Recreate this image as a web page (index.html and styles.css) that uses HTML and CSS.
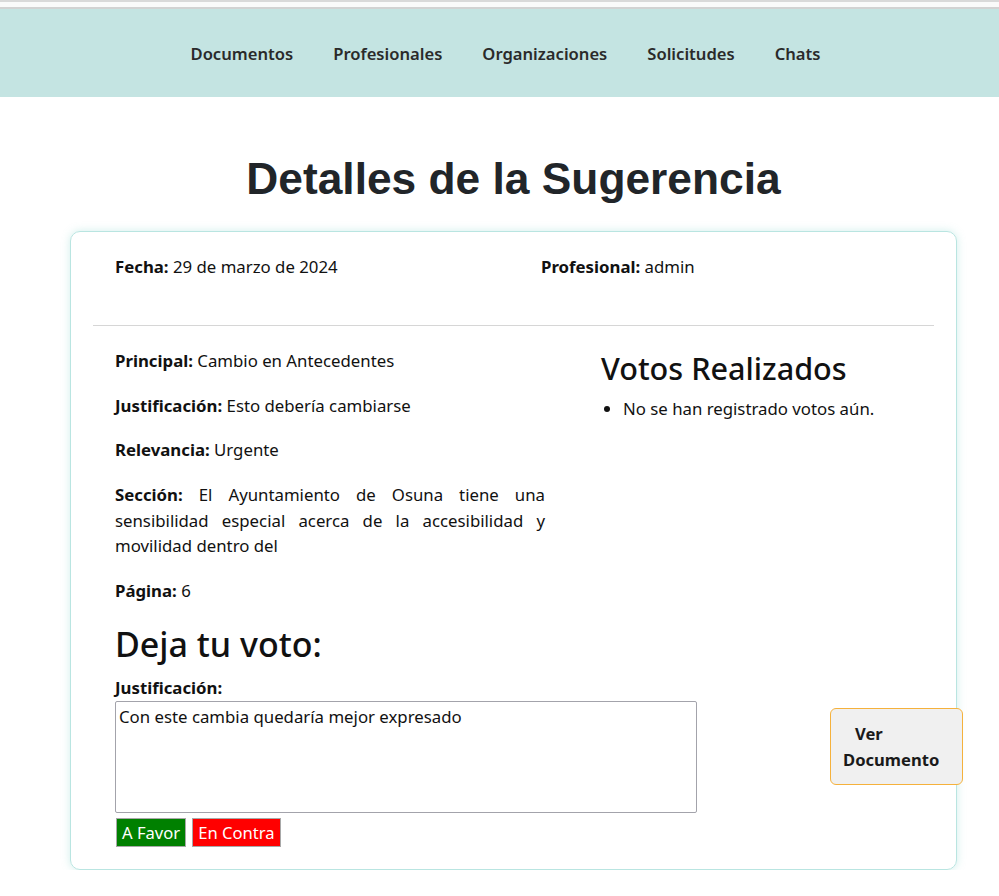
FILE: index.html
```html
<!DOCTYPE html>
<html lang="es">
<head>
<meta charset="utf-8">
<title>Detalles de la Sugerencia</title>
<link rel="stylesheet" href="styles.css">
</head>
<body>
<div class="topstrip"></div>
<nav class="navbar">
  <a href="#">Documentos</a>
  <a href="#">Profesionales</a>
  <a href="#">Organizaciones</a>
  <a href="#">Solicitudes</a>
  <a href="#">Chats</a>
</nav>
<main class="main">
  <h1 class="title">Detalles de la Sugerencia</h1>
  <section class="card">
    <div class="meta">
      <p><strong>Fecha:</strong> 29 de marzo de 2024</p>
      <p><strong>Profesional:</strong> admin</p>
    </div>
    <hr class="divider">
    <div class="details">
      <div class="info">
        <p><strong>Principal:</strong> Cambio en Antecedentes</p>
        <p><strong>Justificación:</strong> Esto debería cambiarse</p>
        <p><strong>Relevancia:</strong> Urgente</p>
        <p class="justify"><strong>Sección:</strong> El Ayuntamiento de Osuna tiene una sensibilidad especial acerca de la accesibilidad y movilidad dentro del</p>
        <p><strong>Página:</strong> 6</p>
      </div>
      <div class="votes">
        <h2 class="heading">Votos Realizados</h2>
        <ul class="vote-list">
          <li>No se han registrado votos aún.</li>
        </ul>
      </div>
    </div>
    <form class="vote-form">
      <h2 class="heading">Deja tu voto:</h2>
      <label class="label" for="just">Justificación:</label>
      <textarea id="just" class="textarea">Con este cambia quedaría mejor expresado</textarea>
      <div class="actions">
        <button type="button" class="btn btn-favor">A Favor</button>
        <button type="button" class="btn btn-contra">En Contra</button>
      </div>
    </form>
  </section>
</main>
<button type="button" class="doc-btn">Ver Documento</button>
</body>
</html>
```

FILE: styles.css
```css
* { box-sizing: border-box; }

body {
  margin: 0;
  font-family: "Noto Sans", "Open Sans", sans-serif;
  font-size: 16.8px;
  color: #111111;
  background: #ffffff;
}

.topstrip {
  height: 9px;
  background: #fafafa;
  border-top: 2px solid #d9d9d9;
  border-bottom: 2px solid #d2d2d2;
}

.navbar {
  height: 88px;
  background: #c4e4e2;
  display: flex;
  justify-content: center;
  align-items: center;
  gap: 40px;
  padding-left: 12px;
}

.navbar a {
  color: #2a2a2a;
  text-decoration: none;
  font-size: 16.6px;
  font-weight: 600;
}

.main {
  width: 887px;
  margin-left: 70px;
}

.title {
  font-family: "Liberation Sans", Arial, sans-serif;
  font-size: 44.3px;
  line-height: 51px;
  font-weight: 700;
  color: #212529;
  text-align: center;
  margin: 56px 0 27px;
}

.card {
  border: 1px solid #b9e5e1;
  border-radius: 10px;
  box-shadow: 0 0 8px rgba(120, 205, 198, 0.35);
  padding: 22px 22px 22px;
}

.card p {
  margin: 0 0 19.2px;
  line-height: 25.6px;
}

.meta {
  display: grid;
  grid-template-columns: 426px 1fr;
  padding: 0 22px 26px;
}

.divider {
  border: 0;
  border-top: 1px solid #d6d6d6;
  margin: 0;
}

.details {
  display: grid;
  grid-template-columns: 430px 1fr;
  column-gap: 56px;
  padding: 22px 22px 0;
}

.justify { text-align: justify; }

.heading {
  font-size: 32px;
  line-height: 38px;
  font-weight: 500;
  margin: 0;
  color: #111;
}

.votes .heading {
  font-size: 30.6px;
  margin-top: 1px;
}

.vote-list {
  margin: 9px 0 0;
  padding-left: 22px;
  line-height: 25.6px;
}

.vote-form {
  padding: 0 22px;
}

.vote-form .heading {
  font-size: 34px;
  margin-top: 2px;
}

.label {
  display: block;
  font-weight: 700;
  line-height: 26px;
  margin-top: 12px;
}

.textarea {
  display: block;
  width: 582px;
  height: 112px;
  border: 1px solid #a3a3ab;
  border-radius: 2px;
  padding: 2px 3px;
  font-family: "Noto Sans", "Open Sans", sans-serif;
  font-size: 16.8px;
  line-height: 25.6px;
  color: #111111;
  resize: none;
  margin: 0 0 5px;
}

.actions {
  display: flex;
  gap: 6px;
  padding-left: 1px;
}

.btn {
  font-family: "Noto Sans", "Open Sans", sans-serif;
  font-size: 16.6px;
  height: 29px;
  line-height: 25px;
  padding: 1px 5px;
  border: 1px solid #a8a8a8;
  color: #ffffff;
  border-radius: 0;
}

.btn-favor { background: #008000; }
.btn-contra { background: #ff0000; }

.doc-btn {
  position: fixed;
  left: 830px;
  top: 708px;
  width: 133px;
  height: 77px;
  background: #f0f0f0;
  border: 1px solid #f5b13c;
  border-radius: 6px;
  padding: 0 12px;
  text-align: left;
  text-indent: 12px;
  font-family: "Noto Sans", "Open Sans", sans-serif;
  font-size: 16.6px;
  font-weight: 700;
  line-height: 26px;
  color: #1a1a1a;
}
```
